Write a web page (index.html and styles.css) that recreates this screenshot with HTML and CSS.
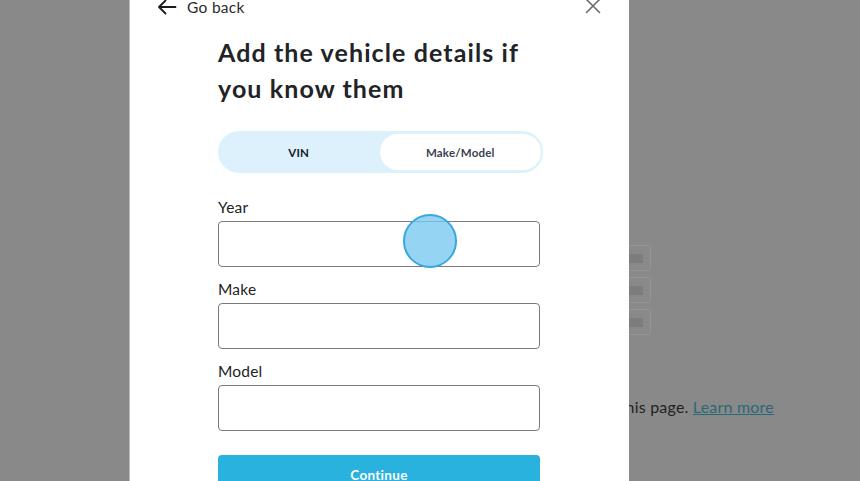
FILE: index.html
```html
<!DOCTYPE html>
<html lang="en">
<head>
<meta charset="utf-8">
<title>Add vehicle details</title>
<link rel="stylesheet" href="styles.css">
</head>
<body>
<div class="page">
  <div class="page-boxes">
    <div class="pbox"><span class="pbar"></span></div>
    <div class="pbox"><span class="pbar"></span></div>
    <div class="pbox"><span class="pbar"></span></div>
  </div>
  <p class="page-note">to use this page. <a href="#">Learn more</a></p>
</div>

<div class="modal">
  <div class="modal-head">
    <a class="back" href="#">
      <svg width="20" height="16" viewBox="0 0 20 16" fill="none" stroke="#1c1c1c" stroke-width="1.8" stroke-linecap="round" stroke-linejoin="round"><path d="M18.5 8H2M8.5 1.5L2 8l6.5 6.5"/></svg>
      <span>Go back</span>
    </a>
    <button class="close" aria-label="Close">
      <svg width="16" height="16" viewBox="0 0 16 16" fill="none" stroke="#6b6b6b" stroke-width="1.6" stroke-linecap="round"><path d="M1.5 1.5l13 13M14.5 1.5l-13 13"/></svg>
    </button>
  </div>
  <div class="modal-body">
    <h1 class="title">Add the vehicle details if you know them</h1>
    <div class="toggle">
      <button class="seg seg-active">VIN</button>
      <button class="seg seg-white">Make/Model</button>
    </div>
    <label class="field-label">Year</label>
    <div class="input input-year"><span class="touch"></span></div>
    <label class="field-label">Make</label>
    <div class="input"></div>
    <label class="field-label">Model</label>
    <div class="input"></div>
    <button class="continue">Continue</button>
  </div>
</div>
</body>
</html>
```

FILE: styles.css
```css
* { box-sizing: border-box; }
html, body { margin: 0; padding: 0; }
body {
  width: 860px;
  height: 481px;
  overflow: hidden;
  background: #898989;
  font-family: "Lato", "Open Sans", "Liberation Sans", sans-serif;
  position: relative;
}

/* background page (seen through the overlay) */
.page {
  padding: 245px 0 0 571px;
  display: flex;
  flex-direction: column;
}
.page-boxes {
  display: flex;
  flex-direction: column;
  gap: 6px;
  padding-left: 39px;
}
.pbox {
  width: 41px;
  height: 26px;
  border: 1px solid #959595;
  border-radius: 2px;
  display: flex;
  align-items: center;
  justify-content: flex-end;
  padding-right: 7px;
}
.pbar {
  width: 26px;
  height: 9px;
  background: #7d7d7d;
}
.page-note {
  margin: 62px 0 0 0;
  font-size: 16px;
  letter-spacing: 0.2px;
  color: #1f1f1f;
  white-space: nowrap;
}
.page-note a {
  color: #2b6877;
  text-decoration: underline;
}

/* modal */
.modal {
  position: absolute;
  left: 129px;
  top: -20px;
  width: 500px;
  height: 520px;
  background: #fff;
  border-left: 1px solid #b9b9b9;
  padding-top: 16px;
}
.modal-head {
  height: 22px;
  display: flex;
  align-items: center;
  justify-content: space-between;
  padding: 0 28px 0 27px;
}
.back {
  display: flex;
  align-items: center;
  gap: 10px;
  color: #2a2a2a;
  text-decoration: none;
  font-size: 15.5px;
  letter-spacing: 0.3px;
}
.close {
  background: none;
  border: 0;
  padding: 0;
  display: flex;
  margin-top: -2px;
}
.modal-body {
  padding-left: 88px;
  width: 411px;
}
.title {
  margin: 16px 0 0 0;
  max-width: 322px;
  font-size: 25px;
  line-height: 36px;
  font-weight: 700;
  color: #222326;
  letter-spacing: 1.1px;
}
.toggle {
  margin-top: 25px;
  width: 325px;
  height: 42px;
  border-radius: 21px;
  background: #dcf1fb;
  display: flex;
  align-items: center;
  padding: 3px 2px 3px 0;
}
.seg {
  flex: 1;
  height: 36px;
  border: 0;
  border-radius: 18px;
  background: transparent;
  font-family: inherit;
  font-size: 11.5px;
  font-weight: 700;
  letter-spacing: 0.2px;
  color: #1f2733;
}
.seg-active { color: #15202b; }
.seg-white { background: #fff; color: #3a4250; }
.field-label {
  display: block;
  margin-top: 24px;
  font-size: 15.5px;
  line-height: 20px;
  letter-spacing: 0.2px;
  color: #222;
}
.input + .field-label { margin-top: 12px; }
.input {
  margin-top: 4px;
  width: 322px;
  height: 46px;
  border: 1px solid #7a7a7a;
  border-radius: 4px;
  background: #fff;
  position: relative;
}
.touch {
  position: absolute;
  left: 184px;
  top: -8px;
  width: 54px;
  height: 54px;
  border-radius: 50%;
  background: rgba(120, 200, 240, 0.78);
  border: 2px solid #3aa8de;
}
.continue {
  margin-top: 24px;
  width: 322px;
  height: 40px;
  border: 0;
  border-radius: 4px;
  background: #29b2de;
  color: #fff;
  font-family: inherit;
  font-size: 13.5px;
  font-weight: 700;
  letter-spacing: 0.3px;
  padding: 0;
}
```
